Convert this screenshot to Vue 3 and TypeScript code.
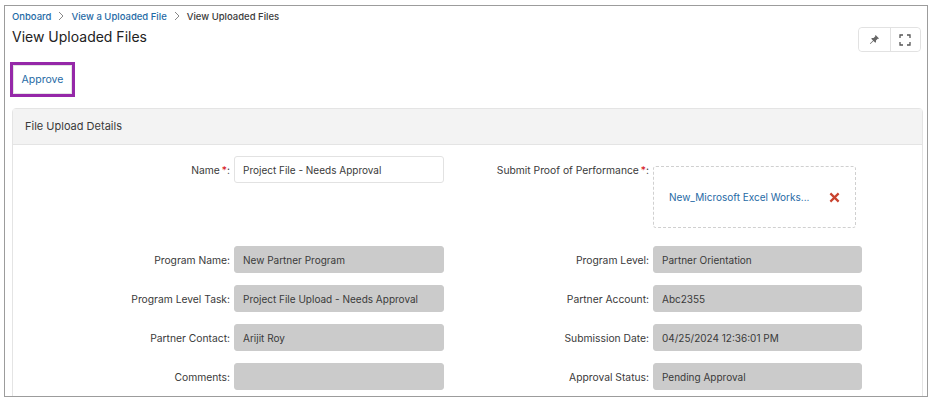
<script setup lang="ts">
interface Field {
  label: string;
  value: string;
}

const rows: [Field, Field][] = [
  [
    { label: "Program Name:", value: "New Partner Program" },
    { label: "Program Level:", value: "Partner Orientation" },
  ],
  [
    { label: "Program Level Task:", value: "Project File Upload - Needs Approval" },
    { label: "Partner Account:", value: "Abc2355" },
  ],
  [
    { label: "Partner Contact:", value: "Arijit Roy" },
    { label: "Submission Date:", value: "04/25/2024 12:36:01 PM" },
  ],
  [
    { label: "Comments:", value: "" },
    { label: "Approval Status:", value: "Pending Approval" },
  ],
];
</script>

<template>
  <div class="frame">
    <div class="page-head">
      <div>
        <nav class="crumbs">
          <a class="crumbs__link">Onboard</a>
          <svg class="crumbs__sep" viewBox="0 0 8 10"><path d="M2 1l4 4-4 4" /></svg>
          <a class="crumbs__link">View a Uploaded File</a>
          <svg class="crumbs__sep" viewBox="0 0 8 10"><path d="M2 1l4 4-4 4" /></svg>
          <span>View Uploaded Files</span>
        </nav>
        <h1 class="title">View Uploaded Files</h1>
      </div>
      <div class="tools">
        <button class="tools__btn" aria-label="Pin">
          <svg viewBox="0 0 12 12" width="11" height="11">
            <path d="M7.2 1l3.8 3.8-.8.5-.7-.2-1.9 1.9.1 1.8-.8.8-2-2L1.6 11 1 10.400l3.400-3.300-2-2 .8-.8 1.800.1 1.900-1.900-.2-.7z" fill="#666" />
          </svg>
        </button>
        <button class="tools__btn" aria-label="Full screen">
          <svg viewBox="0 0 12 12" width="12" height="12" fill="none" stroke="#555" stroke-width="1.300">
            <path d="M1 4V1h3M8 1h3v3M11 8v3H8M4 11H1V8" />
          </svg>
        </button>
      </div>
    </div>

    <div class="actions">
      <button class="approve">Approve</button>
    </div>

    <section class="card">
      <header class="card__head">File Upload Details</header>
      <div class="form">
        <label class="form__label">Name<i>*</i>:</label>
        <div class="form__input">Project File - Needs Approval</div>
        <label class="form__label">Submit Proof of Performance<i>*</i>:</label>
        <div class="upload">
          <a class="upload__name">New_Microsoft Excel Works...</a>
          <svg class="upload__del" viewBox="0 0 12 12" width="11" height="11">
            <path d="M1.500 1.500l9 9M10.500 1.500l-9 9" stroke="#c9432f" stroke-width="2.400" />
          </svg>
        </div>
        <template v-for="(row, i) in rows" :key="i">
          <template v-for="field in row" :key="field.label">
            <label class="form__label">{{ field.label }}</label>
            <div class="form__input form__input--off">{{ field.value }}</div>
          </template>
        </template>
      </div>
    </section>
  </div>
</template>

<style scoped>
.frame {
  box-sizing: border-box;
  width: 924px;
  height: 392px;
  margin: 5px 0 0 4px;
  padding: 0 6px 0 7px;
  border: 1.500px solid #9c9c9c;
  overflow: hidden;
  background: #fff;
  color: #3a3a3a;
  font-family: Inter, "Open Sans", sans-serif;
  font-size: 10.300px;
}

.page-head {
  display: flex;
  justify-content: space-between;
  align-items: flex-start;
}

.crumbs {
  display: flex;
  align-items: center;
  gap: 6px;
  height: 14px;
  margin-top: 3px;
  font-size: 9.500px;
  font-weight: 500;
}

.crumbs__link {
  color: #1f6aa5;
}

.crumbs__sep {
  width: 8px;
  height: 10px;
  fill: none;
  stroke: #888;
  stroke-width: 1;
}

.title {
  margin: 4px 0 0;
  font-size: 14px;
  font-weight: 400;
  line-height: 20px;
  color: #222;
}

.tools {
  display: flex;
  margin-top: 21px;
  border: 1px solid #e2e2e2;
  border-radius: 4px;
}

.tools__btn {
  display: flex;
  align-items: center;
  justify-content: center;
  width: 30.500px;
  height: 23px;
  padding: 0;
  border: 0;
  background: #fff;
  border-radius: 4px;
}

.tools__btn + .tools__btn {
  border-left: 1px solid #e2e2e2;
  border-radius: 0 4px 4px 0;
}

.actions {
  margin: 9.500px 0 0 -2px;
  height: 46px;
}

.approve {
  box-sizing: border-box;
  width: 65px;
  height: 35px;
  padding: 0;
  border: 3px solid #9528a8;
  box-shadow: inset 0 0 0 1px #e4e4e4;
  background: #fff;
  color: #1f6aa5;
  font-family: inherit;
  font-size: 10.500px;
  font-weight: 400;
}

.card {
  width: 909px;
  height: 300px;
  border: 1px solid #e4e4e4;
  border-radius: 4px 4px 0 0;
}

.card__head {
  box-sizing: border-box;
  display: flex;
  align-items: center;
  height: 36px;
  padding: 0 0 0 12px;
  background: #f3f3f3;
  border-bottom: 1px solid #e4e4e4;
  font-size: 11px;
  font-weight: 400;
}

.form {
  display: grid;
  grid-template-columns: 221px 210px 209px 209px;
  grid-template-rows: 78px repeat(4, 27px);
  row-gap: 12px;
  padding-top: 11px;
}

.form__label {
  display: block;
  padding-right: 4px;
  text-align: right;
  line-height: 29px;
}

.form__label i {
  color: #d8232a;
  font-style: normal;
  margin-left: 2px;
}

.form__input {
  box-sizing: border-box;
  height: 27px;
  padding-left: 8px;
  line-height: 26px;
  font-size: 10px;
  border: 1px solid #e2e2e2;
  border-radius: 3px;
}

.form__input--off {
  border-color: #cbcbcb;
  background: #cbcbcb;
}

.upload {
  box-sizing: border-box;
  display: flex;
  align-items: center;
  justify-content: space-between;
  width: 203px;
  height: 62px;
  margin-top: 10.500px;
  padding: 0 15px;
  border: 1px dashed #d0d0d0;
  border-radius: 3px;
}

.upload__name {
  color: #1f6aa5;
  font-size: 10px;
}

.upload__del {
  flex: none;
}
</style>
